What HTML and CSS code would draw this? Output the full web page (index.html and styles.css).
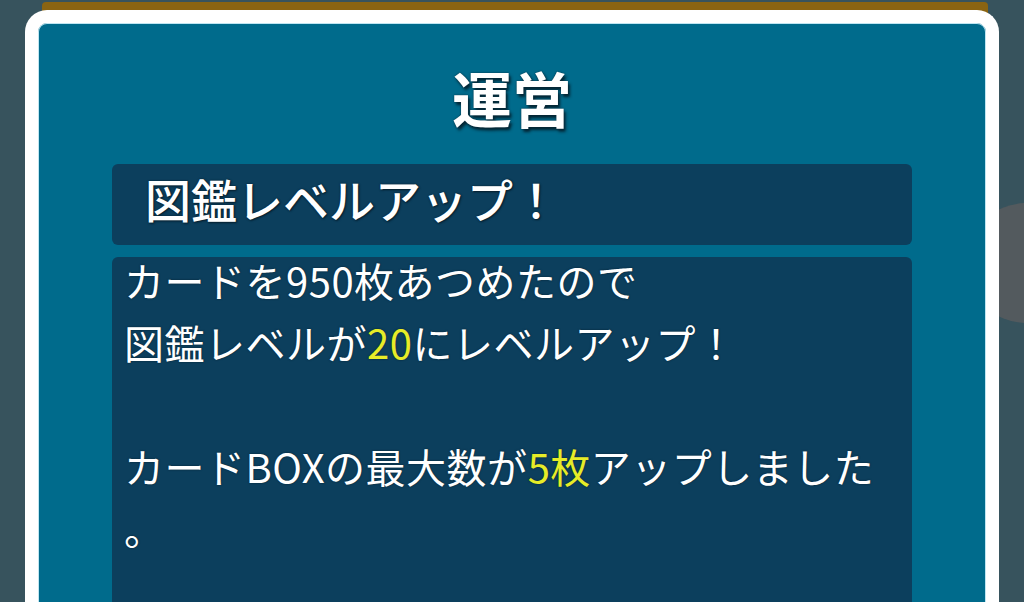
FILE: index.html
```html
<!DOCTYPE html>
<html lang="ja">
<head>
<meta charset="utf-8">
<title>運営</title>
<link rel="stylesheet" href="styles.css">
</head>
<body>
<div class="stage">
  <div class="goldbar"></div>
  <div class="blob"></div>
  <div class="frame">
    <div class="panel">
      <h1 class="title">運営</h1>
      <div class="head-box">図鑑レベルアップ！</div>
      <div class="body-box">
        <p class="message">カードを950枚あつめたので<br>図鑑レベルが<span class="hl">20</span>にレベルアップ！<br><br>カードBOXの最大数が<span class="hl">5枚</span>アップしました<br>。</p>
      </div>
    </div>
  </div>
</div>
</body>
</html>
```

FILE: styles.css
```css
html, body {
  margin: 0;
  padding: 0;
}
body {
  width: 1024px;
  height: 602px;
  overflow: hidden;
  background: #37535d;
  font-family: "Noto Sans CJK JP", "Noto Sans", sans-serif;
}
.stage {
  position: relative;
  width: 1024px;
  height: 602px;
  overflow: hidden;
  padding-top: 10px;
  box-sizing: border-box;
}
.goldbar {
  position: absolute;
  left: 42px;
  top: 2px;
  width: 946px;
  height: 20px;
  background: #8a6412;
  border-radius: 4px 4px 0 0;
}
.blob {
  position: absolute;
  left: 965px;
  top: 203px;
  width: 125px;
  height: 120px;
  border-radius: 50%;
  background: #585c5e;
  opacity: 0.85;
}
.frame {
  position: relative;
  margin-left: 25px;
  width: 974px;
  height: 640px;
  box-sizing: border-box;
  border: 13px solid #ffffff;
  border-bottom: none;
  border-radius: 22px 22px 0 0;
  background: #006b8c;
  box-shadow: inset 0 0 0 1px #bfe6f2;
}
.panel {
  padding: 44px 74px 0;
}
.title {
  margin: 0 0 37px;
  text-align: center;
  font-size: 60px;
  line-height: 60px;
  font-weight: 700;
  color: #ffffff;
  text-shadow: 0 0 2px #0a2c3c, 2px 3px 3px rgba(5, 25, 35, 0.85);
}
.head-box {
  height: 81px;
  box-sizing: border-box;
  padding: 0 0 12px 33px;
  background: #0c3f5d;
  border-radius: 6px;
  font-size: 46px;
  line-height: 69px;
  font-weight: 500;
  color: #ffffff;
  text-shadow: 0 0 2px #071f2e, 1px 1px 2px #071f2e;
}
.body-box {
  margin-top: 12px;
  height: 400px;
  background: #0c3f5d;
  border-radius: 6px;
  padding: 0 12px;
}
.message {
  margin: 0;
  position: relative;
  top: -8px;
  font-size: 40px;
  line-height: 62px;
  letter-spacing: 0.5px;
  white-space: nowrap;
  color: #ffffff;
  text-shadow: 0 0 2px #071f2e;
}
.hl {
  color: #e6ec28;
}
```
